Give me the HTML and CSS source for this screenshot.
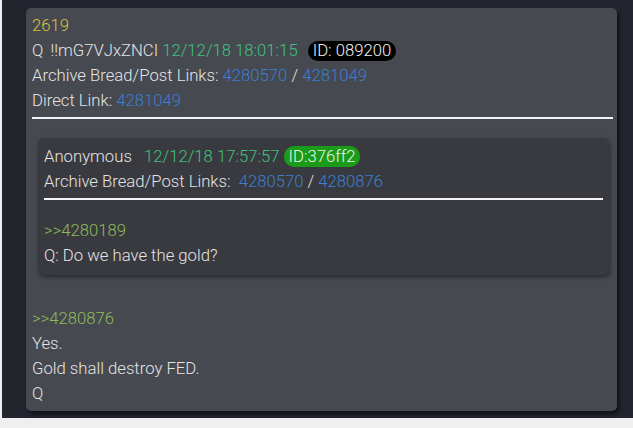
FILE: index.html
```html
<!DOCTYPE html>
<html>
<head>
<meta charset="utf-8">
<link rel="stylesheet" href="styles.css">
</head>
<body>
<div class="page">
  <div class="card">
    <div class="line num">2619</div>
    <div class="line"><span class="author">Q</span> !!mG7VJxZNCI <span class="date">12/12/18 18:01:15</span> <span class="badge badge-black">ID: 089200</span></div>
    <div class="line">Archive Bread/Post Links: <span class="link">4280570</span> / <span class="link">4281049</span></div>
    <div class="line">Direct Link: <span class="link">4281049</span></div>
    <div class="rule"></div>
    <div class="quote-card">
      <div class="line">Anonymous&nbsp;&nbsp; <span class="date">12/12/18 17:57:57</span> <span class="badge badge-green">ID:376ff2</span></div>
      <div class="line">Archive Bread/Post Links:&nbsp; <span class="link">4280570</span> / <span class="link">4280876</span></div>
      <div class="rule inner-rule"></div>
      <div class="line greentext">&gt;&gt;4280189</div>
      <div class="line">Q: Do we have the gold?</div>
    </div>
    <div class="body">
      <div class="line greentext">&gt;&gt;4280876</div>
      <div class="line">Yes.</div>
      <div class="line">Gold shall destroy FED.</div>
      <div class="line">Q</div>
    </div>
  </div>
</div>
</body>
</html>
```

FILE: styles.css
```css
html, body {
  margin: 0;
  padding: 0;
  background: #efefef;
}
.page {
  margin-left: 2px;
  height: 418px;
  box-sizing: border-box;
  background: #22252e;
  padding: 8px 16px 0 24px;
  font-family: Roboto, "Liberation Sans", sans-serif;
  font-weight: 300;
  font-size: 16.7px;
  color: #e4e4e4;
}
.card {
  background: #464950;
  border-radius: 5px;
  box-shadow: 2px 3px 4px rgba(0,0,0,0.6);
  height: 403px;
  box-sizing: border-box;
  padding: 5px 4px 4px 6px;
}
.line {
  line-height: 25px;
  height: 25px;
  white-space: nowrap;
}
.author { margin-right: 3px; }
.num { color: #d9c43a; }
.date { color: #3fc47e; }
.link { color: #3a7fd0; }
.greentext { color: #8dbb5a; }
.badge {
  display: inline-block;
  line-height: 20px;
  padding: 0 5px;
  border-radius: 10px;
  margin-left: 6px;
}
.badge-black { background: #000; color: #f2f2f2; }
.badge-green { background: #1a9b1a; color: #e8f5e8; margin-left: 0; line-height: 21px; padding: 0 4px 0 5px; }
.rule {
  height: 2px;
  background: #f4f4f4;
  margin-top: 4px;
}
.quote-card {
  margin: 19px 4px 0 6px;
  background: #393a3f;
  border-radius: 6px;
  box-shadow: 1px 2px 4px rgba(0,0,0,0.45);
  padding: 6px 6px 7px 6px;
}
.inner-rule {
  margin-top: 4px;
  margin-bottom: 18px;
}
.body {
  margin-top: 31px;
}
```
